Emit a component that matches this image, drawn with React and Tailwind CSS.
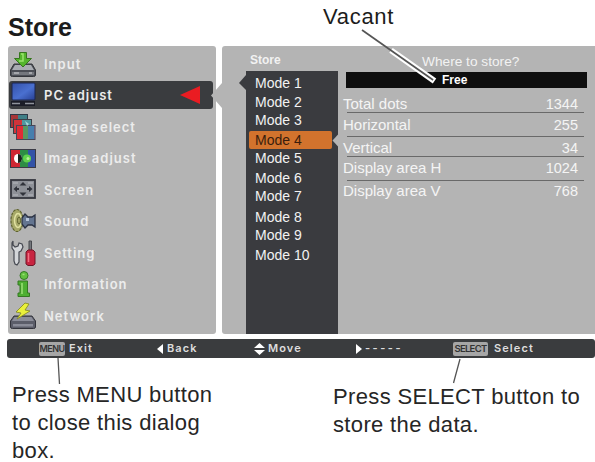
import React from "react";

const Icon = ({ children }) => (
  <svg width="26" height="28" viewBox="0 0 26 28" className="block shrink-0">
    {children}
  </svg>
);

const InputIcon = () => (
  <Icon>
    <path d="M4 14h18l3.500 6v5q0 1.500-2 1.500h-21q-2 0-2-1.500v-5z" fill="#4b4e55" stroke="#34363b" />
    <path d="M5 15h16l3 5H2z" fill="#a9acb2" />
    <path d="M2 22h22v3H2z" fill="#74777d" />
    <path d="M4 23h5M19 23h3" stroke="#d5d7da" />
    <path d="M9.500 2.500h7v6h5L13 17 4.500 8.500h5z" fill="#55b52e" stroke="#37761f" />
    <path d="M11 4h2v7H9" stroke="#9be36d" strokeWidth="1.500" fill="none" />
  </Icon>
);

const PcIcon = () => (
  <Icon>
    <defs>
      <linearGradient id="pc" x1="0" y1="0" x2="1" y2="1">
        <stop offset="0" stopColor="#3350a8" />
        <stop offset=".55" stopColor="#4a70d0" />
        <stop offset="1" stopColor="#273f93" />
      </linearGradient>
    </defs>
    <rect x="2" y="2" width="23" height="17" rx="1" fill="url(#pc)" stroke="#1d2650" />
    <path d="M1 20h24v5H1z" fill="#1b1d27" />
    <path d="M2 22.500h8M15 22.500h9" stroke="#8f939b" strokeWidth="1.300" />
  </Icon>
);

const SelectIcon = () => (
  <Icon>
    <rect x=".5" y="1.500" width="17" height="13" fill="#a73638" stroke="#2f3a48" />
    <path d="M8 2h9v6H8z" fill="#3f7f86" />
    <rect x="3.500" y="6.500" width="18" height="14" fill="#d0343a" stroke="#3b4048" />
    <path d="M12 7h9v8h-9z" fill="#4f99a0" />
    <rect x="6.500" y="12.500" width="18.500" height="14" fill="#e02b35" stroke="#454858" />
    <path d="M13 13h5v13h-5z" fill="#5a9861" />
    <path d="M18 13h6.500v13H18z" fill="#477fae" />
    <path d="M15 8l4 3-2 2" fill="#a6d7da" />
  </Icon>
);

const AdjustIcon = () => (
  <Icon>
    <rect x=".5" y="5.500" width="25" height="18" fill="#cf2733" stroke="#3b3b46" />
    <path d="M10 6h8v17h-8z" fill="#2d8d45" />
    <path d="M18 6h7v17h-7z" fill="#3353a7" />
    <ellipse cx="8" cy="14.500" rx="4" ry="4.500" fill="#fff" />
    <path d="M8 10a4 4.500 0 010 9z" fill="#18221c" />
    <circle cx="17" cy="14.500" r="4" fill="#60d34d" />
    <circle cx="18" cy="14.500" r="1.500" fill="#b8ef95" />
  </Icon>
);

const ScreenIcon = () => (
  <Icon>
    <rect x="1" y="4" width="24" height="18" fill="#8d9097" stroke="#34363e" strokeWidth="1.800" />
    <path d="M13 6l3.500 3.500h-7zM13 20l3.500-3.500h-7zM3.500 13L7 10v2h2v2H7v2zM22.500 13L19 10v2h-2v2h2v2z" fill="#30333b" />
    <path d="M3 7h5M18 7h5M3 19h5M18 19h5" stroke="#b8bac0" />
  </Icon>
);

const SoundIcon = () => (
  <Icon>
    <ellipse cx="7" cy="13.500" rx="6" ry="11" fill="#a6a868" stroke="#5f632e" strokeWidth="1.200" strokeDasharray="3 1" />
    <ellipse cx="8" cy="13.500" rx="3.500" ry="7" fill="none" stroke="#e0e1a1" strokeWidth="1.500" />
    <ellipse cx="9" cy="13.500" rx="1.500" ry="3.500" fill="none" stroke="#5f632e" />
    <path d="M12 11l3-4 3 3h4l3-2v12l-3-2h-4l-3 3-3-4z" fill="#647590" stroke="#2b3243" strokeWidth="1.300" />
    <path d="M16 11h3v3h-3z" fill="#b6c4d9" />
  </Icon>
);

const SettingIcon = () => (
  <Icon>
    <path d="M3 2v4l2 2 3-1 1-3 3 1 1 3-2 4-2 1v10l-2 3-2-1-1-3V12L2 9V4z" fill="#d4d6d9" stroke="#464951" strokeWidth="1.200" />
    <path d="M19 2h2.500v10H19z" fill="#74777c" stroke="#46484d" />
    <path d="M16 13l2-2h5l2 2v12l-2 1.500h-5L16 25z" fill="#c82440" stroke="#701628" />
    <path d="M18.500 14v9" stroke="#f27184" strokeWidth="1.500" />
  </Icon>
);

const InfoIcon = () => (
  <Icon>
    <circle cx="14" cy="5.500" r="4" fill="#62c13f" stroke="#357a24" />
    <path d="M8 11h9.500v12h2v3.500H8V23h2v-8H8z" fill="#4daf31" stroke="#347822" />
    <path d="M12 13v11M12.500 4.500h2" stroke="#9be077" strokeWidth="1.500" />
  </Icon>
);

const NetworkIcon = () => (
  <Icon>
    <path d="M4 14h18l3.500 5v6q0 1.500-2 1.500h-21q-2 0-2-1.500v-6z" fill="#5b5d69" stroke="#33343c" />
    <path d="M4.500 15h17l2.500 4H2z" fill="#8b8d99" />
    <path d="M3 22h20v2.500H3z" fill="#8a8c98" />
    <path d="M15 1L6 10l5 1-4 6 13-8-5-1 4-6z" fill="#eaf03b" stroke="#898e25" strokeWidth=".9" />
  </Icon>
);

const menu = [
  [InputIcon, "Input"],
  [PcIcon, "PC adjust"],
  [SelectIcon, "Image select"],
  [AdjustIcon, "Image adjust"],
  [ScreenIcon, "Screen"],
  [SoundIcon, "Sound"],
  [SettingIcon, "Setting"],
  [InfoIcon, "Information"],
  [NetworkIcon, "Network"],
];

const modes = [
  ["Mode 1", "h-[19px]"],
  ["Mode 2", "h-[18px]"],
  ["Mode 3", "h-[20px]"],
  ["Mode 4", ""],
  ["Mode 5", "h-[20px]"],
  ["Mode 6", "h-[18px]"],
  ["Mode 7", "h-[21px]"],
  ["Mode 8", "h-[18px]"],
  ["Mode 9", "h-[20px]"],
  ["Mode 10", "h-[20px]"],
];

const rows = [
  ["Total dots", "1344", "h-[18px]", true],
  ["Horizontal", "255", "h-[24px] pt-[3px]", true],
  ["Vertical", "34", "h-[20px] pt-[2px]", true],
  ["Display area H", "1024", "h-[24px] pt-[2px]", true],
  ["Display area V", "768", "h-[20px] pt-px", false],
];

function Sidebar() {
  return (
    <nav className="h-[288px] w-[208px] rounded-[3px] bg-[#b4b4b4] pt-[2px]">
      {menu.map(([Glyph, label], i) => (
        <div key={label} className="flex h-[31.500px] items-center pl-px">
          <div
            className={
              i === 1
                ? "flex h-[28px] w-[204px] items-center rounded-[3px] bg-[#3a3c3f] pl-px"
                : "flex h-[28px] w-[204px] items-center pl-px"
            }
          >
            <Glyph />
            <span className="ml-[8px] font-['Inter',sans-serif] text-[13px] leading-[20px] font-semibold tracking-[1px] whitespace-nowrap text-[#ececec]">
              {label}
            </span>
            {i === 1 && (
              <svg width="20" height="18" viewBox="0 0 20 18" className="mr-[13px] ml-auto block">
                <path d="M0 9L20 0v18z" fill="#ea1c22" />
              </svg>
            )}
          </div>
        </div>
      ))}
    </nav>
  );
}

function ModeList() {
  return (
    <div className="h-[263px] w-[92px] bg-[#3a3b3f] pt-[4px] text-[14px] leading-[16px] text-[#f2f2f2]">
      {modes.map(([name, height], i) =>
        i === 3 ? (
          <div key={name} className="-mt-px mb-px ml-[3px] h-[18px] w-[83px] rounded-[2px] bg-[#d2732d] pt-px pl-[6px] text-[#3a1d0c]">
            {name}
          </div>
        ) : (
          <div key={name} className={"pl-[9px] " + height}>
            {name}
          </div>
        )
      )}
    </div>
  );
}

function Details() {
  return (
    <div className="ml-[5px] w-[244px] pt-px">
      <div className="ml-[3px] h-[16px] w-[241px] bg-[#0e0e0e] pl-[96px] text-[12px] leading-[17px] font-bold text-white">
        Free
      </div>
      <div className="pt-[7px]">
        {rows.map(([label, value, height, line]) => (
          <div key={label} className={"relative flex justify-between pr-[9px] text-[15px] leading-[18px] text-[#f4f4f4] " + height}>
            <span>{label}</span>
            <span className="text-[14.500px]">{value}</span>
            {line && <span className="absolute right-[3px] bottom-0 left-[4px] h-px bg-[#696969]" />}
          </div>
        ))}
      </div>
    </div>
  );
}

const Key = ({ children, className }) => (
  <span className={"flex h-[14px] items-center justify-center rounded-[2px] bg-[#a6a6a6] leading-none font-semibold text-[#333] " + className}>
    {children}
  </span>
);

function Footer() {
  return (
    <footer className="mt-[5px] ml-[7px] flex h-[19px] w-[588px] items-center rounded-[3px] bg-[#3a3c3e] font-['Inter',sans-serif] text-[11px] leading-none font-semibold tracking-[1.1px] text-[#dedede]">
      <div className="ml-[32px] flex w-[118px] items-center">
        <Key className="mr-[4px] w-[26px] text-[9px] tracking-[-0.6px]">MENU</Key>Exit
      </div>
      <div className="flex w-[97px] items-center">
        <svg width="6" height="10" className="mr-[4px]"><path d="M6 0v10L0 5z" fill="#fff" /></svg>
        Back
      </div>
      <div className="flex w-[102px] items-center">
        <svg width="11" height="12" className="mr-[3px]"><path d="M5.500 0l5.500 5H0zM5.500 12L0 7h11z" fill="#fff" /></svg>
        Move
      </div>
      <div className="flex w-[97px] items-center">
        <svg width="6" height="10" className="mr-[3px]"><path d="M0 0v10l6-5z" fill="#fff" /></svg>
        <span className="tracking-[2.500px]">-----</span>
      </div>
      <Key className="mr-[6px] w-[35px] text-[9.500px] tracking-[-0.700px]">SELECT</Key>Select
    </footer>
  );
}

export default function App() {
  return (
    <div className="relative h-[462px] w-[595px] overflow-hidden bg-white font-['Liberation_Sans',Arial,sans-serif]">
      <header className="flex h-[46px] text-[#1c1c1c]">
        <h1 className="w-[323px] pt-[12px] pl-[8px] text-[25px] leading-[30px] font-bold">Store</h1>
        <span className="pt-[4px] text-[22px] leading-[26px] tracking-[0.700px]">Vacant</span>
      </header>
      <main className="flex gap-[6px] pl-[8px]">
        <Sidebar />
        <section className="h-[288px] w-[373px] rounded-l-[3px] bg-[#b4b4b4] pl-[24px]">
          <div className="flex h-[25px] pl-[4px] text-[#f2f2f2]">
            <span className="w-[172px] pt-[7px] text-[12px] leading-[14px] font-bold">Store</span>
            <span className="pt-[8px] text-[13.700px] leading-[16px] whitespace-nowrap">Where to store?</span>
          </div>
          <div className="flex">
            <ModeList />
            <Details />
          </div>
        </section>
      </main>
      <Footer />
      <div className="flex text-[22px] leading-[28px] tracking-[0.350px] whitespace-nowrap text-[#262626]">
        <p className="w-[333px] pt-[23px] pl-[12px]">
          Press MENU button<br />to close this dialog<br />box.
        </p>
        <p className="pt-[25px]">
          Press SELECT button to<br />store the data.
        </p>
      </div>
      <svg width="595" height="462" viewBox="0 0 595 462" className="pointer-events-none absolute inset-0">
        <path d="M222 83v25l-11-12.500z" fill="#b4b4b4" />
        <path d="M246 75v15l-7-7z" fill="#3a3b3f" />
        <path d="M338.500 134v13l-6-6.500z" fill="#b4b4b4" />
        <path d="M391 50.400L434.500 81" stroke="#fff" strokeWidth="6" />
        <path d="M362 30L433.100 80" stroke="#555" strokeWidth="1.700" />
        <path d="M58 358l1.500 26M460 359l-6.500 24" stroke="#555" strokeWidth="1.300" />
      </svg>
    </div>
  );
}
